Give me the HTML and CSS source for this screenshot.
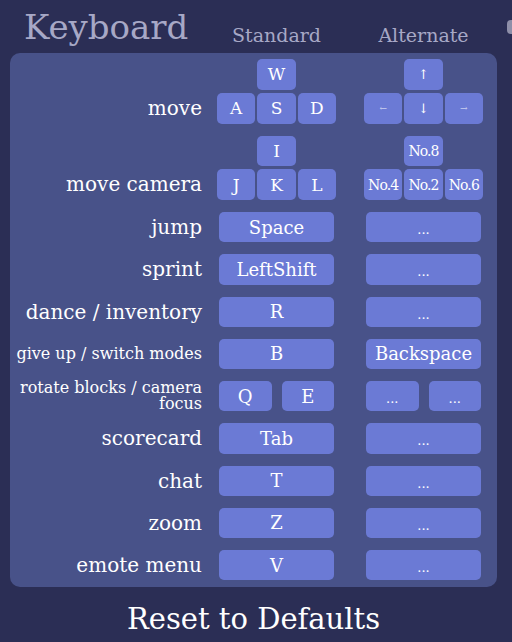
FILE: index.html
```html
<!DOCTYPE html>
<html lang="en">
<head>
<meta charset="utf-8">
<title>Keyboard controls</title>
<link rel="stylesheet" href="styles.css">
</head>
<body>
<div class="screen">
  <header class="top">
    <h1 class="title">Keyboard</h1>
    <div class="col-head">Standard</div>
    <div class="col-head alt">Alternate</div>
  </header>
  <div class="scroll-thumb"></div>

  <section class="panel">
    <div class="row cluster-row">
      <div class="label">move</div>
      <div class="cluster">
        <div class="key up">W</div>
        <div class="key low">A</div>
        <div class="key low">S</div>
        <div class="key low">D</div>
      </div>
      <div class="alt">
        <div class="cluster">
          <div class="key up arrow">↑</div>
          <div class="key low arrow side">←</div>
          <div class="key low arrow">↓</div>
          <div class="key low arrow side">→</div>
        </div>
      </div>
    </div>

    <div class="row cluster-row">
      <div class="label">move camera</div>
      <div class="cluster">
        <div class="key up">I</div>
        <div class="key low">J</div>
        <div class="key low">K</div>
        <div class="key low">L</div>
      </div>
      <div class="alt">
        <div class="cluster">
          <div class="key up num">No.8</div>
          <div class="key low num">No.4</div>
          <div class="key low num">No.2</div>
          <div class="key low num">No.6</div>
        </div>
      </div>
    </div>

    <div class="row">
      <div class="label">jump</div>
      <div class="btn">Space</div>
      <div class="alt"><div class="btn dots">...</div></div>
    </div>

    <div class="row">
      <div class="label">sprint</div>
      <div class="btn">LeftShift</div>
      <div class="alt"><div class="btn dots">...</div></div>
    </div>

    <div class="row">
      <div class="label">dance / inventory</div>
      <div class="btn">R</div>
      <div class="alt"><div class="btn dots">...</div></div>
    </div>

    <div class="row">
      <div class="label small">give up / switch modes</div>
      <div class="btn">B</div>
      <div class="alt"><div class="btn">Backspace</div></div>
    </div>

    <div class="row">
      <div class="label small two">rotate blocks / camera focus</div>
      <div class="pair">
        <div class="btn">Q</div>
        <div class="btn">E</div>
      </div>
      <div class="alt">
        <div class="pair">
          <div class="btn dots">...</div>
          <div class="btn dots">...</div>
        </div>
      </div>
    </div>

    <div class="row">
      <div class="label">scorecard</div>
      <div class="btn">Tab</div>
      <div class="alt"><div class="btn dots">...</div></div>
    </div>

    <div class="row">
      <div class="label">chat</div>
      <div class="btn">T</div>
      <div class="alt"><div class="btn dots">...</div></div>
    </div>

    <div class="row">
      <div class="label">zoom</div>
      <div class="btn">Z</div>
      <div class="alt"><div class="btn dots">...</div></div>
    </div>

    <div class="row">
      <div class="label">emote menu</div>
      <div class="btn">V</div>
      <div class="alt"><div class="btn dots">...</div></div>
    </div>
  </section>

  <div class="reset">Reset to Defaults</div>
</div>
</body>
</html>
```

FILE: styles.css
```css
html, body {
  margin: 0;
  padding: 0;
  background: #2b2e55;
  overflow: hidden;
}

body {
  width: 512px;
  height: 642px;
  font-family: "DejaVu Serif", "Liberation Serif", serif;
  color: #ffffff;
}

.screen {
  position: relative;
  width: 512px;
  height: 642px;
}

.top {
  display: grid;
  grid-template-columns: 192px 119px 132px;
  column-gap: 15px;
  align-items: end;
  height: 53px;
  margin-left: 10px;
  box-sizing: border-box;
  padding-bottom: 8px;
}

.title {
  margin: 0;
  padding-left: 14px;
  font-size: 34px;
  font-weight: normal;
  line-height: 1;
  color: #a7a8c6;
  align-self: start;
  padding-top: 10px;
  white-space: nowrap;
}

.col-head {
  font-size: 19px;
  color: #a7a8c6;
  text-align: center;
  line-height: 1;
}

.col-head.alt {
  padding-left: 13px;
}

.scroll-thumb {
  position: absolute;
  right: 0;
  top: 20px;
  width: 5px;
  height: 14px;
  background: #8e8fa9;
  border-radius: 4px 0 0 4px;
}

.panel {
  margin-left: 10px;
  width: 487px;
  box-sizing: border-box;
  padding: 6px 14px 7px 0;
  background: #485289;
  border-radius: 10px;
  display: flex;
  flex-direction: column;
  gap: 12px;
}

.row {
  display: grid;
  grid-template-columns: 192px 119px 132px;
  grid-template-rows: 30.25px;
  column-gap: 15px;
  align-items: center;
}

.row.cluster-row {
  grid-template-rows: 64.5px;
}

.alt {
  padding-left: 13px;
}

.label {
  text-align: right;
  font-size: 20px;
  line-height: 22px;
  white-space: nowrap;
}

.label.small {
  font-size: 16px;
}

.label.two {
  white-space: normal;
  line-height: 16px;
}

.cluster-row .label {
  align-self: end;
  line-height: 31px;
}

.cluster {
  display: grid;
  grid-template-columns: repeat(3, 1fr);
  grid-template-rows: 30.75px 30.75px;
  column-gap: 2px;
  row-gap: 3px;
}

.key {
  background: #6b7ad5;
  border-radius: 5px;
  display: flex;
  align-items: center;
  justify-content: center;
  font-size: 17px;
}

.key.up {
  grid-column: 2;
  grid-row: 1;
}

.key.low {
  grid-row: 2;
}

.key.num {
  font-size: 14px;
  letter-spacing: -0.9px;
}

.key.arrow {
  font-size: 13px;
}

.key.arrow.side {
  font-size: 9px;
  color: #c9cff0;
}

.btn {
  background: #6b7ad5;
  border-radius: 5px;
  height: 30.25px;
  margin: 0 2px;
  display: flex;
  align-items: center;
  justify-content: center;
  font-size: 18px;
  white-space: nowrap;
}

.btn.dots {
  font-size: 13px;
  padding-top: 5px;
  box-sizing: border-box;
}

.pair {
  display: flex;
  gap: 10px;
  margin: 0 2px;
}

.pair .btn {
  flex: 1;
  margin: 0;
}

.reset {
  margin-left: 10px;
  width: 487px;
  text-align: center;
  font-size: 29px;
  line-height: 1;
  padding-top: 18px;
}
```
